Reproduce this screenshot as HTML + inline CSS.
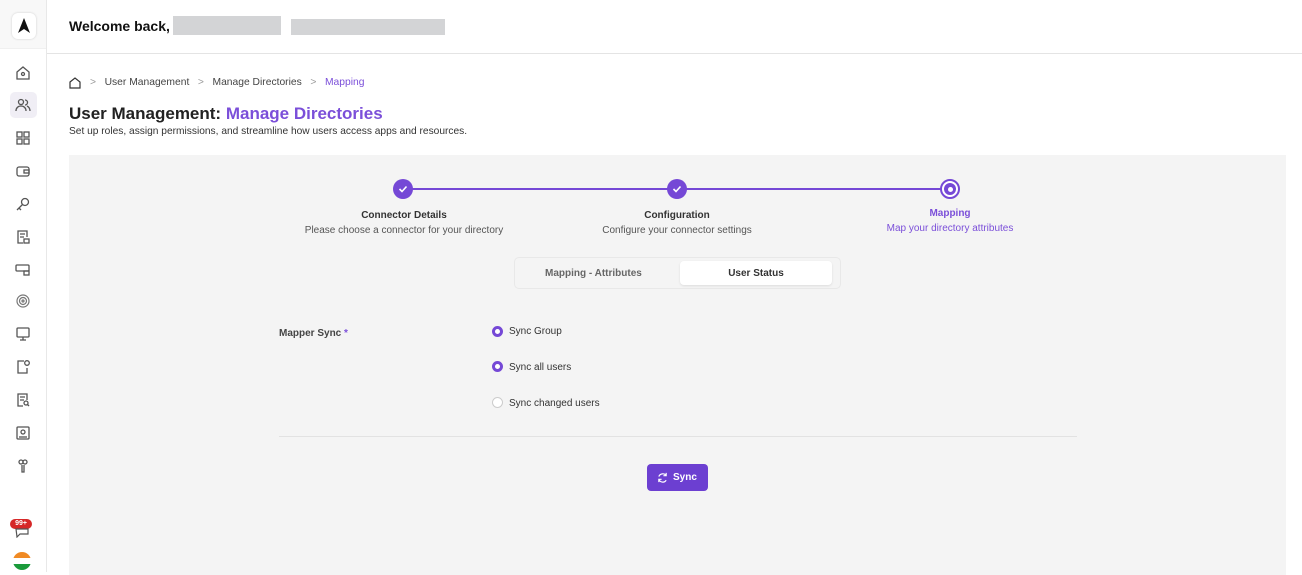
<!DOCTYPE html><html><head><style>
*{box-sizing:border-box;margin:0;padding:0}
body{width:1302px;height:572px;overflow:hidden;background:#fff;font-family:"Liberation Sans",sans-serif;position:relative;color:#222}
.sb{position:absolute;left:0;top:0;width:47px;height:572px;border-right:1px solid #e8e8e8;background:#fff}
.logo{position:absolute;left:12px;top:13px;width:24px;height:26px;border-radius:6px;background:#fff;box-shadow:0 0 2px #ccc}
.ic{position:absolute;left:15px;width:16px;height:16px}
.hdr{position:absolute;left:47px;top:0;right:0;height:54px;border-bottom:1px solid #e4e4e4}
.abs{position:absolute}
.p{color:#7b4fd9}
.panel{position:absolute;left:69px;top:155px;width:1217px;height:420px;background:#f4f4f4}
.circ{position:absolute;width:20px;height:20px;border-radius:50%;background:#7548d6}
.t{position:absolute;font-size:10px;text-align:center;width:260px}
.radio{position:absolute;left:492px;width:11px;height:11px;border-radius:50%}
.rl{position:absolute;left:509px;font-size:10px;color:#333}
</style></head><body>
<div class="sb">
<div class="abs" style="left:0;top:0;width:46px;height:48px;background:#f8f8f8"></div>
<div class="logo"><svg width="24" height="26" viewBox="0 0 24 26"><path d="M12 5 L18 20 L12 16 L6 20Z" fill="#111"/></svg></div>
<div class="abs" style="left:0;top:48px;width:46px;border-top:1px solid #f0f0f0"></div>
<div class="abs" style="left:10px;top:92px;width:27px;height:26px;background:#f0eef5;border-radius:5px"></div>
<svg class="ic" style="top:65px" viewBox="0 0 16 16" fill="none" stroke="#555" stroke-width="1.3"><path d="M2 7L8 2l6 5v7H2z"/><circle cx="8" cy="9" r="1.5"/></svg>
<svg class="ic" style="top:97px" viewBox="0 0 16 16" fill="none" stroke="#555" stroke-width="1.3"><circle cx="6" cy="5" r="2.5"/><path d="M1 14c0-3 2-5 5-5s5 2 5 5M10 3a2.5 2.5 0 010 5M12 9c2 1 3 3 3 5"/></svg>
<svg class="ic" style="top:130px" viewBox="0 0 16 16" fill="none" stroke="#555" stroke-width="1.3"><rect x="2" y="2" width="5" height="5"/><rect x="9" y="2" width="5" height="5"/><rect x="2" y="9" width="5" height="5"/><rect x="9" y="9" width="5" height="5"/></svg>
<svg class="ic" style="top:163px" viewBox="0 0 16 16" fill="none" stroke="#555" stroke-width="1.3"><rect x="2" y="4" width="12" height="9" rx="2"/><rect x="9" y="7" width="5" height="3"/></svg>
<svg class="ic" style="top:196px" viewBox="0 0 16 16" fill="none" stroke="#555" stroke-width="1.3"><circle cx="10" cy="6" r="3.5"/><path d="M7.5 8.5L2 14M4 12l2 2"/></svg>
<svg class="ic" style="top:229px" viewBox="0 0 16 16" fill="none" stroke="#555" stroke-width="1.3"><path d="M12 8V2H3v12h5M5 5h5M5 8h4"/><rect x="9" y="10" width="5" height="4"/></svg>
<svg class="ic" style="top:261px" viewBox="0 0 16 16" fill="none" stroke="#555" stroke-width="1.3"><rect x="1" y="4" width="13" height="6" rx="1"/><rect x="9" y="10" width="5" height="4"/></svg>
<svg class="ic" style="top:293px" viewBox="0 0 16 16" fill="none" stroke="#777" stroke-width="1.2"><circle cx="8" cy="8" r="6"/><circle cx="8" cy="8" r="3.5"/><circle cx="8" cy="8" r="1"/></svg>
<svg class="ic" style="top:326px" viewBox="0 0 16 16" fill="none" stroke="#555" stroke-width="1.3"><rect x="2" y="2" width="12" height="9" rx="1"/><path d="M8 11v3M5 14h6"/></svg>
<svg class="ic" style="top:359px" viewBox="0 0 16 16" fill="none" stroke="#555" stroke-width="1.3"><path d="M9 2H3v12h9V9"/><circle cx="12" cy="4" r="2.3"/></svg>
<svg class="ic" style="top:392px" viewBox="0 0 16 16" fill="none" stroke="#555" stroke-width="1.3"><path d="M12 8V2H3v12h5M5 5h5M5 8h4"/><circle cx="11" cy="11" r="2"/><path d="M12.5 12.5L14 14"/></svg>
<svg class="ic" style="top:425px" viewBox="0 0 16 16" fill="none" stroke="#555" stroke-width="1.3"><rect x="2" y="2" width="12" height="12" rx="1"/><circle cx="8" cy="7" r="2"/><path d="M4 12h8"/></svg>
<svg class="ic" style="top:458px" viewBox="0 0 16 16" fill="none" stroke="#555" stroke-width="1.3"><circle cx="6" cy="4" r="2"/><circle cx="10" cy="4" r="2"/><path d="M7 7v7h2V7"/></svg>
<div class="abs" style="left:10px;top:519px;width:22px;height:10px;border-radius:5px;background:#d62828;color:#fff;font-size:7px;font-weight:bold;text-align:center;line-height:10px">99+</div>
<svg class="abs" style="left:14px;top:528px" width="16" height="10" viewBox="0 0 16 10" fill="none" stroke="#555" stroke-width="1.2"><path d="M2 1h12v5H6l-3 3z"/></svg>
<div class="abs" style="left:13px;top:552px;width:18px;height:18px;border-radius:50%;background:linear-gradient(#f08a24 33%,#fff 33%,#fff 66%,#1a9a3a 66%)"></div>
</div>
<div class="hdr">
<div class="abs" style="left:22px;top:18px;font-size:14px;font-weight:bold;color:#111">Welcome back,</div>
<div class="abs" style="left:126px;top:16px;width:108px;height:19px;background:#d3d4d6"></div>
<div class="abs" style="left:244px;top:19px;width:154px;height:16px;background:#d3d4d6"></div>
</div>
<svg class="abs" style="left:69px;top:77px" width="12" height="12" viewBox="0 0 12 12" fill="none" stroke="#333" stroke-width="1.2"><path d="M1 5L6 1l5 4v6H1z"/></svg>
<div class="abs" style="left:90px;top:77px;font-size:10.3px;color:#444"><span style="color:#999">&gt;</span>&nbsp;&nbsp; User Management &nbsp;&nbsp;<span style="color:#999">&gt;</span>&nbsp;&nbsp; Manage Directories &nbsp;&nbsp;<span style="color:#999">&gt;</span>&nbsp;&nbsp; <span class="p">Mapping</span></div>
<div class="abs" style="left:69px;top:104px;font-size:17px;font-weight:bold;color:#222">User Management: <span class="p">Manage Directories</span></div>
<div class="abs" style="left:69px;top:126px;font-size:10.2px;color:#333">Set up roles, assign permissions, and streamline how users access apps and resources.</div>
<div class="panel"></div>
<div class="abs" style="left:403px;top:188px;width:547px;height:2px;background:#7548d6"></div>
<div class="circ" style="left:393px;top:179px"><svg width="20" height="20"><path d="M6.5 10l2.5 2.5 4.5-5" stroke="#fff" stroke-width="1.6" fill="none"/></svg></div>
<div class="circ" style="left:667px;top:179px"><svg width="20" height="20"><path d="M6.5 10l2.5 2.5 4.5-5" stroke="#fff" stroke-width="1.6" fill="none"/></svg></div>
<div class="circ" style="left:940px;top:179px;background:#fff;border:2px solid #7548d6"><div style="position:absolute;left:2px;top:2px;width:12px;height:12px;border-radius:50%;background:#7548d6"><div style="position:absolute;left:3.5px;top:3.5px;width:5px;height:5px;border-radius:50%;background:#fff"></div></div></div>
<div class="t" style="left:274px;top:210px;font-weight:bold;color:#333">Connector Details</div>
<div class="t" style="left:274px;top:225px;color:#555">Please choose a connector for your directory</div>
<div class="t" style="left:547px;top:210px;font-weight:bold;color:#333">Configuration</div>
<div class="t" style="left:547px;top:225px;color:#555">Configure your connector settings</div>
<div class="t p" style="left:820px;top:208px;font-weight:bold">Mapping</div>
<div class="t p" style="left:820px;top:223px">Map your directory attributes</div>
<div class="abs" style="left:514px;top:257px;width:327px;height:32px;border:1px solid #e8e8e8;border-radius:5px;background:#f4f4f4"></div>
<div class="abs" style="left:545px;top:268px;font-size:10px;color:#666;font-weight:bold">Mapping - Attributes</div>
<div class="abs" style="left:680px;top:261px;width:152px;height:24px;background:#fff;border-radius:4px;box-shadow:0 1px 2px #ddd;font-size:10px;font-weight:bold;color:#333;text-align:center;line-height:25px">User Status</div>
<div class="abs" style="left:279px;top:328px;font-size:10px;font-weight:bold;color:#444">Mapper Sync <span class="p">*</span></div>
<div class="radio" style="top:326px;border:3px solid #7548d6;background:#fff"></div>
<div class="rl" style="top:326px">Sync Group</div>
<div class="radio" style="top:361px;border:3px solid #7548d6;background:#fff"></div>
<div class="rl" style="top:362px">Sync all users</div>
<div class="radio" style="top:397px;border:1px solid #ccc;background:#fff"></div>
<div class="rl" style="top:398px">Sync changed users</div>
<div class="abs" style="left:279px;top:436px;width:798px;height:1px;background:#e2e2e2"></div>
<div class="abs" style="left:647px;top:464px;width:61px;height:27px;background:#6c3fd1;border-radius:4px;color:#fff;font-size:10px;font-weight:bold;line-height:28px;padding-left:26px">Sync</div>
<svg class="abs" style="left:657px;top:472px" width="11" height="11" viewBox="0 0 12 12" fill="none" stroke="#fff" stroke-width="1.3"><path d="M10 4A4.5 4.5 0 002 5M2 8a4.5 4.5 0 008 1M10 1v3H7M2 11V8h3"/></svg>
</body></html>
